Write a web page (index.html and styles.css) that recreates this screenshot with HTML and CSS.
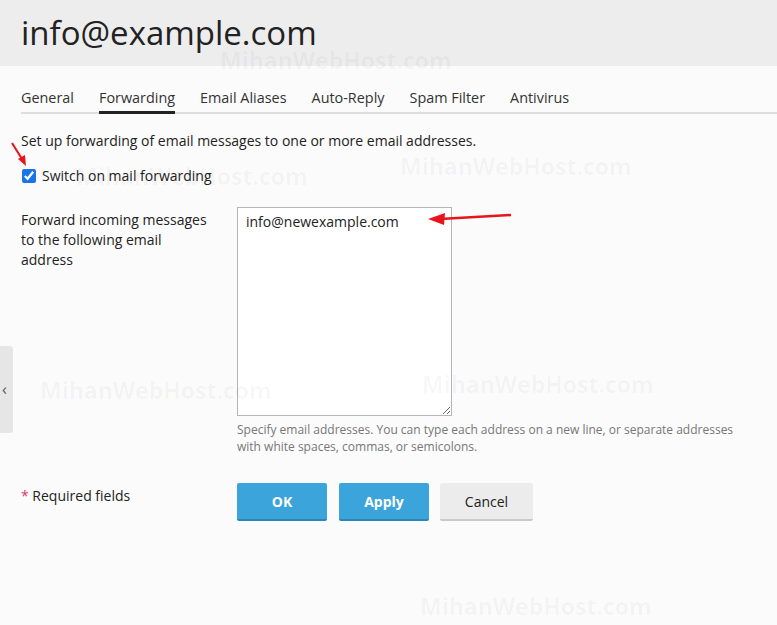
FILE: index.html
```html
<!DOCTYPE html>
<html lang="en">
<head>
    <meta charset="UTF-8">
    <meta name="viewport" content="width=device-width, initial-scale=1.0">
    <title>info@example.com</title>
    <link rel="stylesheet" href="styles.css">
</head>
<body>
    <div class="header">
        <h1>info@example.com</h1>
    </div>

    <div class="content">
        <div class="tabs">
            <span class="tab">General</span>
            <span class="tab active">Forwarding</span>
            <span class="tab">Email Aliases</span>
            <span class="tab">Auto-Reply</span>
            <span class="tab">Spam Filter</span>
            <span class="tab">Antivirus</span>
        </div>

        <p class="intro">Set up forwarding of email messages to one or more email addresses.</p>

        <label class="check-row">
            <input type="checkbox" checked>
            <span>Switch on mail forwarding</span>
        </label>

        <div class="form-row">
            <div class="form-label">Forward incoming messages to the following email address</div>
            <div class="form-field">
                <textarea class="addresses">info@newexample.com</textarea>
                <div class="hint">Specify email addresses. You can type each address on a new line, or separate addresses with white spaces, commas, or semicolons.</div>
            </div>
        </div>

        <div class="form-row actions">
            <div class="form-label"><span class="star">*</span> Required fields</div>
            <div class="buttons">
                <button class="btn primary">OK</button>
                <button class="btn primary">Apply</button>
                <button class="btn">Cancel</button>
            </div>
        </div>
    </div>

    <div class="side-toggle">&#8249;</div>

    <!-- watermark -->
    <span class="mark" style="left:220px; top:44px">MihanWebHost.com</span>
    <span class="mark" style="left:76px; top:160px">MihanWebHost.com</span>
    <span class="mark" style="left:400px; top:150px">MihanWebHost.com</span>
    <span class="mark" style="left:40px; top:374px">MihanWebHost.com</span>
    <span class="mark" style="left:422px; top:368px">MihanWebHost.com</span>
    <span class="mark" style="left:420px; top:590px">MihanWebHost.com</span>

    <!-- annotation arrows -->
    <svg class="arrows" width="777" height="625" viewBox="0 0 777 625">
        <path d="M12 143 L22 159" stroke="#e8141b" stroke-width="2" fill="none"/>
        <path d="M26 166 L18 159 L25 155 Z" fill="#e8141b"/>
        <path d="M511 215 L440 219" stroke="#e8141b" stroke-width="2.5" fill="none"/>
        <path d="M428 219 L445 213 L444 225 Z" fill="#e8141b"/>
    </svg>
</body>
</html>
```

FILE: styles.css
```css
body {
    font-family: "Open Sans", Arial, sans-serif;
    font-size: 14px;
    color: #222;
    background-color: #fbfbfb;
    margin: 0;
    padding: 0;
    height: 625px;
    overflow: hidden;
}

.header {
    height: 66px;
    background: #ededed;
    padding-left: 21px;
    display: flex;
    align-items: center;
}

h1 {
    margin: 0;
    font-size: 33px;
    font-weight: 400;
    color: #222;
    line-height: 1;
    padding-bottom: 2px;
}

.content {
    padding: 20px 0 0 21px;
}

.tabs {
    display: flex;
    gap: 25px;
    border-bottom: 2px solid #dedede;
    height: 26px;
}

.tab {
    color: #333;
    font-size: 14.4px;
    line-height: 24px;
    height: 26px;
    box-sizing: border-box;
}

.tab.active {
    border-bottom: 3px solid #222;
    height: 28px;
}

.intro {
    margin: 17px 0 0;
    line-height: 20px;
}

.check-row {
    display: flex;
    align-items: center;
    gap: 6px;
    margin-top: 15px;
    line-height: 20px;
}

.check-row input {
    width: 14px;
    height: 14px;
    margin: 0 0 0 1px;
    accent-color: #1a73e8;
}

.form-row {
    display: flex;
    margin-top: 21px;
}

.form-label {
    width: 216px;
    flex-shrink: 0;
    padding-right: 24px;
    box-sizing: border-box;
    line-height: 20px;
    padding-top: 3px;
}

.form-field {
    display: flex;
    flex-direction: column;
}

.addresses {
    width: 215px;
    height: 209px;
    box-sizing: border-box;
    border: 1px solid #b5b5b5;
    border-radius: 0;
    background: #fff;
    padding: 4px 8px;
    font-family: "Open Sans", Arial, sans-serif;
    font-size: 14px;
    color: #222;
    line-height: 20px;
    margin: 0;
}

.hint {
    width: 510px;
    margin-top: 5px;
    font-size: 12px;
    line-height: 17px;
    color: #777;
}

.actions {
    margin-top: 28px;
}

.actions .form-label {
    padding-top: 3px;
}

.star {
    color: #d33a6a;
}

.buttons {
    display: flex;
    gap: 12px;
}

.btn {
    width: 90px;
    height: 38px;
    border: none;
    border-bottom: 2px solid #c9c9c9;
    border-radius: 2px;
    background: #ececec;
    color: #222;
    font-family: "Open Sans", Arial, sans-serif;
    font-size: 14px;
    cursor: pointer;
}

.btn:last-child {
    width: 93px;
    margin-left: -1px;
}

.btn.primary {
    background: #3ba5db;
    border-bottom-color: #2b86b6;
    color: #fff;
    font-weight: 700;
}

.side-toggle {
    position: absolute;
    left: 0;
    top: 346px;
    width: 13px;
    height: 87px;
    background: #e6e6e6;
    border-radius: 0 3px 3px 0;
    color: #555;
    font-size: 16px;
    line-height: 87px;
    text-align: left;
    padding-left: 2px;
    box-sizing: border-box;
}

.mark {
    position: absolute;
    font-family: "Open Sans", Arial, sans-serif;
    font-weight: 700;
    font-size: 23px;
    color: rgba(0, 0, 0, 0.035);
    pointer-events: none;
    white-space: nowrap;
}

.arrows {
    position: absolute;
    left: 0;
    top: 0;
    pointer-events: none;
}
```
